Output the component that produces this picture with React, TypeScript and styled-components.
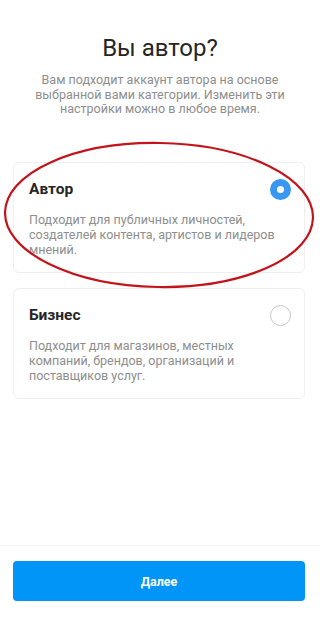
import React from "react";
import styled, { createGlobalStyle } from "styled-components";

const GlobalStyle = createGlobalStyle`
  html, body {
    margin: 0;
    padding: 0;
    background: #fff;
  }
  body {
    font-family: Roboto, "Liberation Sans", Arial, sans-serif;
    color: #262626;
  }
  * {
    box-sizing: border-box;
  }
`;

const Page = styled.div`
  position: relative;
  display: flex;
  flex-direction: column;
  height: 100vh;
  min-height: 617px;
`;

const Header = styled.header`
  display: flex;
  flex-direction: column;
  align-items: center;
  padding: 34px 20px 0;
`;

const Title = styled.h1`
  margin: 0;
  font-size: 24px;
  line-height: 28px;
  font-weight: 400;
  color: #262626;
`;

const Subtitle = styled.p`
  margin: 11px 0 0;
  max-width: 256px;
  font-size: 12.5px;
  line-height: 14.5px;
  color: #8e8e8e;
  text-align: center;
`;

const Options = styled.div`
  display: flex;
  flex-direction: column;
  gap: 15px;
  padding: 0 15px 0 13px;
  margin-top: 45px;
`;

const Card = styled.label`
  display: flex;
  flex-direction: column;
  padding: 16px 15px 15px;
  border: 1px solid #efefef;
  border-radius: 6px;
  cursor: pointer;
`;

const CardHead = styled.div`
  display: flex;
  align-items: center;
  justify-content: space-between;
`;

const CardTitle = styled.span`
  font-size: 15.5px;
  line-height: 20px;
  font-weight: 700;
  color: #262626;
`;

const Radio = styled.span<{ $checked?: boolean }>`
  width: 21px;
  height: 21px;
  border-radius: 50%;
  margin-right: -2px;
  border: ${(p) => (p.$checked ? "7px solid #3897f0" : "1.5px solid #c7c7c7")};
  background: #fff;
`;

const CardText = styled.p`
  margin: 12px 0 0;
  max-width: 250px;
  font-size: 12.5px;
  line-height: 15px;
  color: #8e8e8e;
`;

const Footer = styled.footer`
  margin-top: auto;
  padding: 15px 15px 16px 13px;
  border-top: 1px solid #f3f3f3;
`;

const NextButton = styled.button`
  display: block;
  width: 100%;
  height: 40px;
  border: none;
  border-radius: 4px;
  background: #0095f6;
  color: #fff;
  font-family: Roboto, "Liberation Sans", Arial, sans-serif;
  font-size: 12.5px;
  font-weight: 700;
`;

const Annotation = styled.svg`
  position: absolute;
  left: 0;
  top: 0;
  width: 320px;
  height: 300px;
  pointer-events: none;
`;

const options = [
  {
    id: "author",
    title: "Автор",
    text: "Подходит для публичных личностей, создателей контента, артистов и лидеров мнений.",
    checked: true,
  },
  {
    id: "business",
    title: "Бизнес",
    text: "Подходит для магазинов, местных компаний, брендов, организаций и поставщиков услуг.",
    checked: false,
  },
];

const App: React.FC = () => {
  return (
    <>
      <GlobalStyle />
      <Page>
        <Header>
          <Title>Вы автор?</Title>
          <Subtitle>
            Вам подходит аккаунт автора на основе выбранной вами категории. Изменить эти
            настройки можно в любое время.
          </Subtitle>
        </Header>
        <Options>
          {options.map((o) => (
            <Card key={o.id}>
              <CardHead>
                <CardTitle>{o.title}</CardTitle>
                <Radio $checked={o.checked} />
              </CardHead>
              <CardText>{o.text}</CardText>
            </Card>
          ))}
        </Options>
        <Footer>
          <NextButton>Далее</NextButton>
        </Footer>
        <Annotation viewBox="0 0 320 300">
          <ellipse
            cx="159"
            cy="215"
            rx="154"
            ry="72"
            fill="none"
            stroke="#c3141b"
            strokeWidth="2.2"
            transform="rotate(1 159 215)"
          />
        </Annotation>
      </Page>
    </>
  );
};

export default App;
